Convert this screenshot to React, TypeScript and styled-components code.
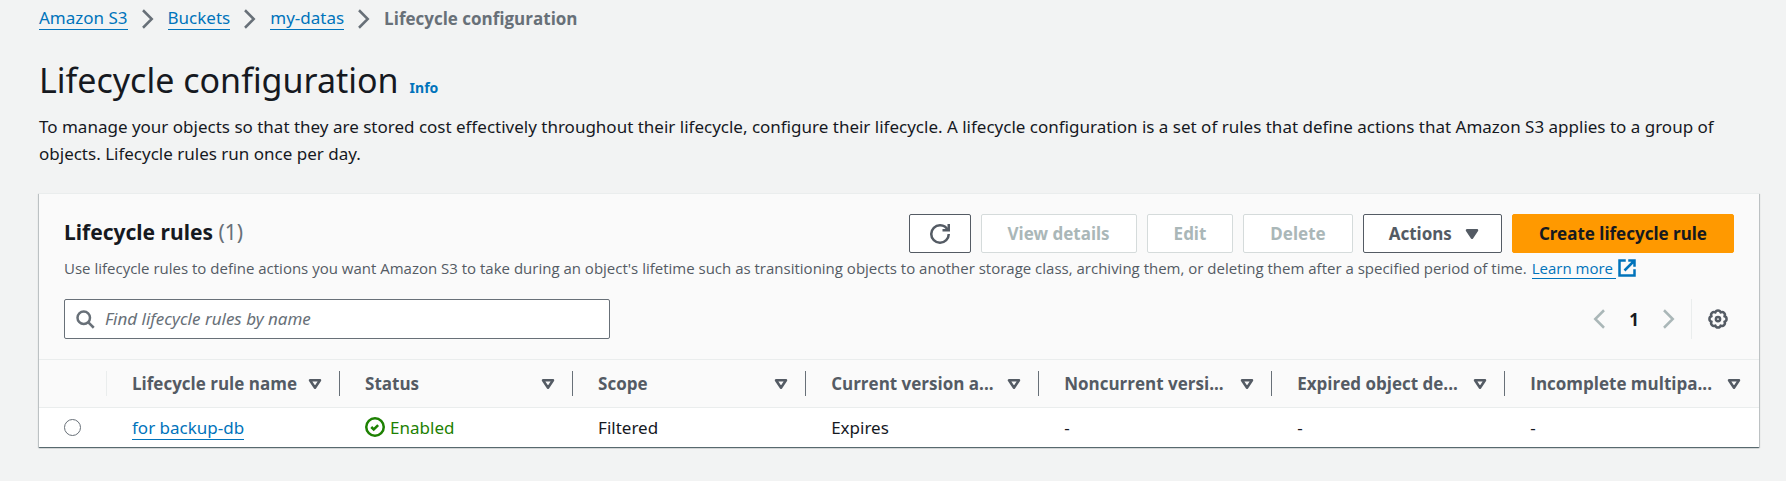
import React from "react";
import styled, { createGlobalStyle, css } from "styled-components";

const GlobalStyle = createGlobalStyle`
  *, *::before, *::after { box-sizing: border-box; }
  body {
    margin: 0;
    background: #f2f3f3;
    color: #16191f;
    font-family: "Noto Sans", "Open Sans", sans-serif;
    font-size: 17px;
    line-height: 27px;
  }
  button, input { font: inherit; }
`;

const Page = styled.main`
  padding: 7px 27px 33px 39px;
`;

const Icon = styled.svg<{ $filled?: boolean }>`
  display: block;
  flex: none;
  width: 20px;
  height: 20px;
  fill: ${(p) => (p.$filled ? "currentColor" : "none")};
  stroke: currentColor;
  stroke-width: 2;
`;

const Link = styled.a`
  color: #0073bb;
  text-decoration: none;
  border-bottom: 1px solid currentColor;
`;

const Breadcrumbs = styled.ol`
  display: flex;
  align-items: center;
  gap: 10px;
  margin: 0;
  padding: 0;
  list-style: none;
  line-height: 22px;
  color: #687078;
`;

const Crumb = styled.li`
  display: flex;
  align-items: center;
  gap: 10px;
`;

const CurrentCrumb = styled.span`
  font-family: "Open Sans", "Noto Sans", sans-serif;
  font-weight: 700;
`;

const PageHeader = styled.header`
  margin-top: 27px;
`;

const TitleRow = styled.div`
  display: flex;
  align-items: baseline;
  gap: 11px;
`;

const Title = styled.h1`
  margin: 0;
  font-size: 34px;
  line-height: 46px;
  font-weight: 400;
`;

const InfoLink = styled.a`
  color: #0073bb;
  font-size: 14px;
  font-weight: 700;
  text-decoration: none;
`;

const Intro = styled.p`
  margin: 10px 0 0;
`;

const Card = styled.section`
  margin-top: 26px;
  background: #fff;
  border-top: 1px solid #eaeded;
  box-shadow: 0 1px 1px rgba(0, 28, 36, 0.5), 1px 1px 1px rgba(0, 28, 36, 0.15),
    -1px 1px 1px rgba(0, 28, 36, 0.15);
`;

const CardHeader = styled.div`
  padding: 20px 25px;
  background: #fafafa;
`;

const HeadingRow = styled.div`
  display: flex;
  justify-content: space-between;
  align-items: center;
`;

const CardTitle = styled.h2`
  margin: 0;
  padding-bottom: 4px;
  font-size: 21px;
  line-height: 28px;
`;

const Count = styled.span`
  color: #687078;
  font-weight: 400;
`;

const Actions = styled.div`
  display: flex;
  gap: 10px;
`;

const Button = styled.button<{ $primary?: boolean }>`
  display: flex;
  align-items: center;
  gap: 10px;
  height: 39px;
  padding: 0 26px;
  border: 1px solid #545b64;
  border-radius: 2px;
  background: #fff;
  color: #545b64;
  font-weight: 700;
  cursor: pointer;
  &:disabled {
    border-color: #d5dbdb;
    color: #aab7b8;
    cursor: default;
  }
  ${(p) =>
    p.$primary &&
    css`
      border-color: #ff9900;
      background: #ff9900;
      color: #16191f;
    `}
`;

const IconButton = styled(Button)`
  padding: 0 20px;
`;

const MenuButton = styled(Button)`
  padding: 0 19px 0 25px;
`;

const Description = styled.p`
  display: flex;
  align-items: center;
  gap: 5px;
  margin: 3px 0 0;
  color: #545b64;
  font-family: "Open Sans", "Noto Sans", sans-serif;
  font-size: 15px;
  line-height: 24px;
`;

const LearnMore = styled.a`
  display: flex;
  align-items: center;
  gap: 1px;
  color: #0073bb;
  text-decoration: none;
  line-height: 20px;
  white-space: nowrap;
`;

const LearnMoreText = styled.span`
  padding-right: 3px;
  border-bottom: 1px solid currentColor;
`;

const Tools = styled.div`
  display: flex;
  justify-content: space-between;
  align-items: center;
  margin-top: 19px;
`;

const SearchBox = styled.label`
  display: flex;
  align-items: center;
  gap: 10px;
  width: 546px;
  height: 40px;
  padding: 0 10px;
  border: 1px solid #687078;
  border-radius: 2px;
  background: #fff;
  color: #687078;
`;

const SearchInput = styled.input`
  flex: 1;
  min-width: 0;
  padding: 0 0 2px;
  border: 0;
  outline: 0;
  background: none;
  color: #16191f;
  &::placeholder {
    color: #687078;
    font-style: italic;
    opacity: 1;
  }
`;

const Pager = styled.nav`
  display: flex;
  align-items: center;
  height: 40px;
`;

const PagerButton = styled.button<{ $muted?: boolean }>`
  display: flex;
  justify-content: center;
  min-width: 20px;
  padding: 0;
  border: 0;
  background: none;
  color: ${(p) => (p.$muted ? "#aab7b8" : "#545b64")};
`;

const PageNumber = styled(PagerButton)`
  margin: 0 15px;
  color: #16191f;
  font-weight: 700;
`;

const Preferences = styled.div`
  display: flex;
  align-items: center;
  height: 40px;
  margin-left: 12px;
  padding: 0 6px 0 16px;
  border-left: 1px solid #eaeded;
`;

const Table = styled.table`
  width: 100%;
  table-layout: fixed;
  border-collapse: collapse;
`;

const SelectCol = styled.col`
  width: 68px;
`;

const DataCol = styled.col`
  width: 13.55%;
`;

const HeadCell = styled.th`
  height: 48px;
  padding: 0;
  border-top: 1px solid #eaeded;
  border-bottom: 1px solid #eaeded;
  background: #fafafa;
  color: #545b64;
  font-family: "Open Sans", "Noto Sans", sans-serif;
  font-weight: 700;
  text-align: left;
`;

const HeadInner = styled.div<{ $divider?: "light" | "dark" }>`
  display: flex;
  align-items: center;
  justify-content: space-between;
  height: 25px;
  padding: 0 14px 0 25px;
  border-right: 1px solid
    ${(p) => (p.$divider === "dark" ? "#687078" : p.$divider === "light" ? "#eaeded" : "transparent")};
  white-space: nowrap;
`;

const Cell = styled.td`
  height: 39px;
  padding: 0 25px;
`;

const Radio = styled.input`
  display: block;
  appearance: none;
  width: 17px;
  height: 17px;
  margin: 0;
  border: 1px solid #687078;
  border-radius: 50%;
  background: #fff;
  &:checked { border: 5px solid #0073bb; }
`;

const RowLink = styled(Link)`
  display: inline-block;
  line-height: 22px;
`;

const Status = styled.span`
  display: flex;
  align-items: center;
  gap: 5px;
  color: #1d8102;
`;

const AngleRight = () => (
  <Icon viewBox="0 0 16 16" aria-hidden="true">
    <path d="m4 1 7 7-7 7" />
  </Icon>
);

const AngleLeft = () => (
  <Icon viewBox="0 0 16 16" aria-hidden="true">
    <path d="M12 1 5 8l7 7" />
  </Icon>
);

const Caret = ({ filled }: { filled?: boolean }) => (
  <Icon viewBox="0 0 16 16" $filled={filled} strokeLinejoin="round" aria-hidden="true">
    <path d="M4 5h8l-4 6-4-6z" />
  </Icon>
);

const parents = ["Amazon S3", "Buckets", "my-datas"];

const columns = [
  "Lifecycle rule name",
  "Status",
  "Scope",
  "Current version a...",
  "Noncurrent versi...",
  "Expired object de...",
  "Incomplete multipa...",
];

export default function App() {
  return (
    <>
      <GlobalStyle />
      <Page>
        <nav aria-label="Breadcrumbs">
          <Breadcrumbs>
            {parents.map((name) => (
              <Crumb key={name}>
                <Link href="#">{name}</Link>
                <AngleRight />
              </Crumb>
            ))}
            <Crumb>
              <CurrentCrumb aria-current="page">Lifecycle configuration</CurrentCrumb>
            </Crumb>
          </Breadcrumbs>
        </nav>

        <PageHeader>
          <TitleRow>
            <Title>Lifecycle configuration</Title>
            <InfoLink href="#">Info</InfoLink>
          </TitleRow>
          <Intro>
            To manage your objects so that they are stored cost effectively throughout their lifecycle,
            configure their lifecycle. A lifecycle configuration is a set of rules that define actions
            that Amazon S3 applies to a group of objects. Lifecycle rules run once per day.
          </Intro>
        </PageHeader>

        <Card>
          <CardHeader>
            <HeadingRow>
              <CardTitle>
                Lifecycle rules <Count>(1)</Count>
              </CardTitle>
              <Actions>
                <IconButton type="button" aria-label="Refresh">
                  <Icon viewBox="0 0 16 16" aria-hidden="true">
                    <path d="M10 5h5V0" />
                    <path d="M15 8a6.957 6.957 0 0 1-7 7 6.957 6.957 0 0 1-7-7 6.957 6.957 0 0 1 7-7 6.87 6.87 0 0 1 6.3 4" />
                  </Icon>
                </IconButton>
                <Button type="button" disabled>View details</Button>
                <Button type="button" disabled>Edit</Button>
                <Button type="button" disabled>Delete</Button>
                <MenuButton type="button" aria-haspopup="menu">
                  Actions
                  <Caret filled />
                </MenuButton>
                <Button type="button" $primary>Create lifecycle rule</Button>
              </Actions>
            </HeadingRow>
            <Description>
              Use lifecycle rules to define actions you want Amazon S3 to take during an object's
              lifetime such as transitioning objects to another storage class, archiving them, or
              deleting them after a specified period of time.
              <LearnMore href="#">
                <LearnMoreText>Learn more</LearnMoreText>
                <Icon viewBox="0 0 16 16" aria-hidden="true">
                  <path d="M9 2h5v5M6 10l8-8M14 9v5H2V2h5" />
                </Icon>
              </LearnMore>
            </Description>
            <Tools>
              <SearchBox>
                <Icon viewBox="0 0 16 16" aria-hidden="true">
                  <circle cx="7" cy="7" r="5" />
                  <path d="m15 15-4.500-4.500" />
                </Icon>
                <SearchInput
                  type="text"
                  aria-label="Find lifecycle rules by name"
                  placeholder="Find lifecycle rules by name"
                />
              </SearchBox>
              <Pager aria-label="Pagination">
                <PagerButton type="button" disabled $muted aria-label="Previous page">
                  <AngleLeft />
                </PagerButton>
                <PageNumber type="button" aria-current="page">1</PageNumber>
                <PagerButton type="button" disabled $muted aria-label="Next page">
                  <AngleRight />
                </PagerButton>
                <Preferences>
                  <PagerButton type="button" aria-label="Preferences">
                    <Icon viewBox="0 0 16 16" aria-hidden="true" strokeLinejoin="round">
                      <path d="M13.170 5.860a2.200 2.200 0 0 1 0 4.280 2.200 2.200 0 0 1-3.030 3.030 2.200 2.200 0 0 1-4.280 0 2.200 2.200 0 0 1-3.030-3.030 2.200 2.200 0 0 1 0-4.280 2.200 2.200 0 0 1 3.030-3.030 2.200 2.200 0 0 1 4.280 0 2.200 2.200 0 0 1 3.030 3.030z" />
                      <circle cx="8" cy="8" r="1.700" />
                    </Icon>
                  </PagerButton>
                </Preferences>
              </Pager>
            </Tools>
          </CardHeader>

          <Table>
            <colgroup>
              <SelectCol />
              {columns.map((name, i) => (i < columns.length - 1 ? <DataCol key={name} /> : <col key={name} />))}
            </colgroup>
            <thead>
              <tr>
                <HeadCell aria-label="Selection">
                  <HeadInner $divider="light" />
                </HeadCell>
                {columns.map((name, i) => (
                  <HeadCell key={name} scope="col">
                    <HeadInner $divider={i < columns.length - 1 ? "dark" : undefined}>
                      {name}
                      <Caret />
                    </HeadInner>
                  </HeadCell>
                ))}
              </tr>
            </thead>
            <tbody>
              <tr>
                <Cell>
                  <Radio type="radio" name="rule" aria-label="Select for backup-db" />
                </Cell>
                <Cell>
                  <RowLink href="#">for backup-db</RowLink>
                </Cell>
                <Cell>
                  <Status>
                    <Icon viewBox="0 0 16 16" aria-hidden="true">
                      <circle cx="8" cy="8" r="7" />
                      <path d="m5 8 2 2 3.500-3.500" />
                    </Icon>
                    Enabled
                  </Status>
                </Cell>
                <Cell>Filtered</Cell>
                <Cell>Expires</Cell>
                <Cell>-</Cell>
                <Cell>-</Cell>
                <Cell>-</Cell>
              </tr>
            </tbody>
          </Table>
        </Card>
      </Page>
    </>
  );
}
